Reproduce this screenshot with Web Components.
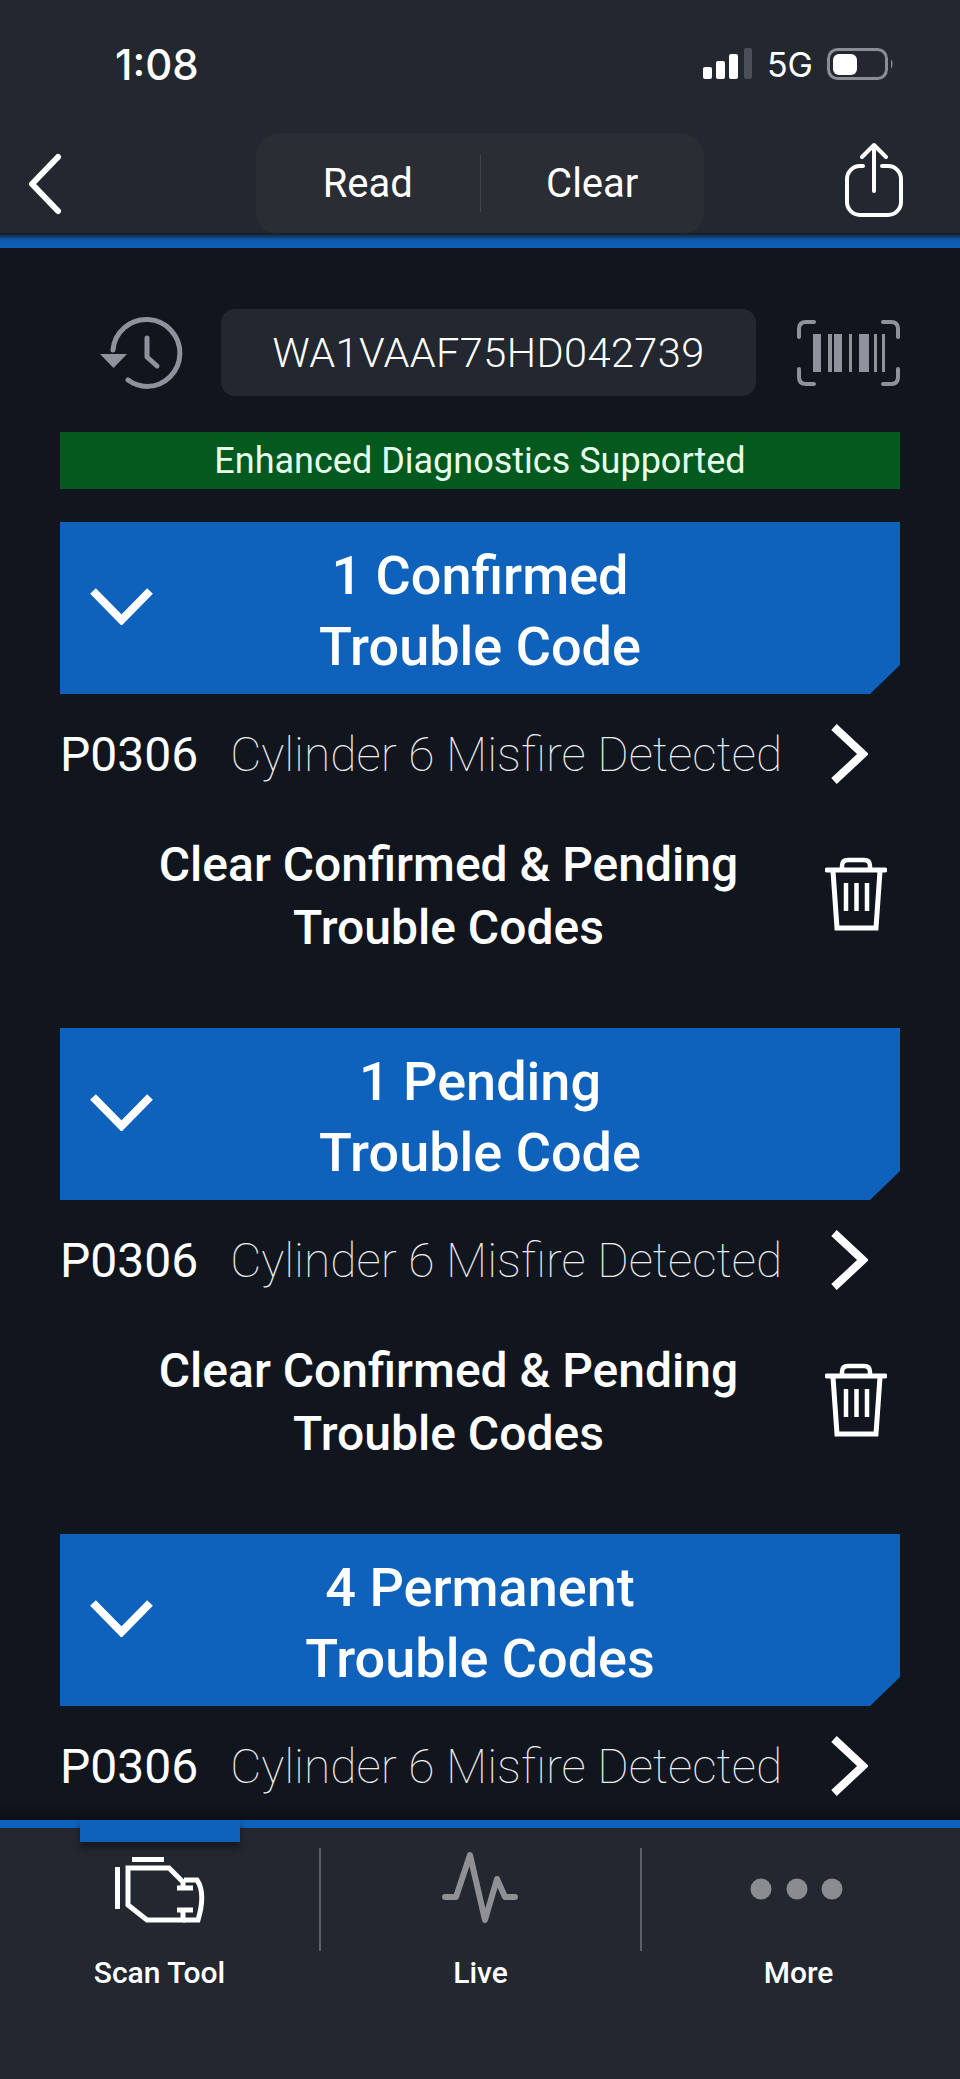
<!DOCTYPE html>
<html lang="en">
<head>
<meta charset="utf-8">
<title>Scan Tool</title>
<style>
  html, body { margin: 0; padding: 0; background: #11151e; }
  body { font-family: Roboto, "Liberation Sans", sans-serif; }
</style>
</head>
<body>
<scan-app>
  <status-bar time="1:08" network="5G"></status-bar>
  <top-bar></top-bar>
  <vin-row vin="WA1VAAF75HD042739"></vin-row>
  <notice-bar>Enhanced Diagnostics Supported</notice-bar>
  <code-section line1="1 Confirmed" line2="Trouble Code" code="P0306" desc="Cylinder 6 Misfire Detected" clear></code-section>
  <code-section line1="1 Pending" line2="Trouble Code" code="P0306" desc="Cylinder 6 Misfire Detected" clear></code-section>
  <code-section line1="4 Permanent" line2="Trouble Codes" code="P0306" desc="Cylinder 6 Misfire Detected"></code-section>
  <tab-bar slot="tabs"></tab-bar>
</scan-app>

<script>
class ScanApp extends HTMLElement {
  constructor() {
    super();
    this.attachShadow({ mode: 'open' });
  }

  connectedCallback() {
    this.shadowRoot.innerHTML = `
<style>
  :host {
    display: flex;
    flex-direction: column;
    width: 960px;
    height: 2079px;
    overflow: hidden;
    background: #11151e;
    color: #fff;
    font-family: Roboto, "Liberation Sans", sans-serif;
  }
  .top { flex: none; }
  .main {
    flex: 1;
    min-height: 0;
    overflow: hidden;
  }
</style>
<div class="top"><slot name="head"></slot></div>
<div class="main"><slot></slot></div>
<slot name="tabs"></slot>
`;
    this.querySelector('status-bar').slot = 'head';
    this.querySelector('top-bar').slot = 'head';
  }
}

class StatusBar extends HTMLElement {
  constructor() {
    super();
    this.attachShadow({ mode: 'open' });
  }

  connectedCallback() {
    this.shadowRoot.innerHTML = `
<style>
  :host {
    display: flex;
    justify-content: space-between;
    align-items: center;
    height: 128px;
    padding: 0 65px 0 115px;
    background: #23272f;
    box-sizing: border-box;
  }
  .time {
    font-family: Inter, Roboto, sans-serif;
    font-size: 42px;
    font-weight: 500;
    color: #fff;
  }
  .right {
    display: flex;
    align-items: center;
    gap: 14px;
  }
  .net {
    font-family: Inter, Roboto, sans-serif;
    font-size: 34px;
    font-weight: 400;
    color: #fff;
  }
  svg { display: block; }
</style>
<span class="time">${this.getAttribute('time')}</span>
<span class="right">
  <svg width="50" height="32" viewBox="0 0 50 32">
    <rect x="0" y="19" width="9" height="12" rx="2" fill="#fff"/>
    <rect x="13" y="13" width="9" height="18" rx="2" fill="#fff"/>
    <rect x="26" y="6" width="9" height="25" rx="2" fill="#fff"/>
    <rect x="41" y="0" width="8" height="31" rx="2" fill="#4c4f57"/>
  </svg>
  <span class="net">${this.getAttribute('network')}</span>
  <svg width="68" height="32" viewBox="0 0 68 32">
    <rect x="1.5" y="1.5" width="58" height="29" rx="9" fill="none" stroke="#8a8d94" stroke-width="3"/>
    <rect x="6" y="6" width="24" height="21" rx="6" fill="#fff"/>
    <path d="M64 11 q3 5 0 10z" fill="#8a8d94"/>
  </svg>
</span>
`;
  }
}

class TopBar extends HTMLElement {
  constructor() {
    super();
    this.attachShadow({ mode: 'open' });
  }

  connectedCallback() {
    this.shadowRoot.innerHTML = `
<style>
  :host {
    display: block;
    background: #23272f;
  }
  .row {
    display: grid;
    grid-template-columns: 1fr 448px 1fr;
    height: 100px;
    padding-top: 5px;
  }
  .back {
    padding: 19px 0 0 26px;
  }
  .share {
    justify-self: end;
    padding: 9px 56px 0 0;
  }
  .seg {
    display: flex;
    align-items: center;
    background: #2b2d35;
    border-radius: 24px 24px 20px 20px;
    font-size: 40px;
    color: #fff;
  }
  .seg span {
    flex: 1;
    text-align: center;
    height: 57px;
    line-height: 57px;
  }
  .seg span + span {
    border-left: 1px solid #43454d;
  }
  .rule {
    height: 15px;
    background: linear-gradient(#141820 0, #0f5aaa 45%, #0f62bb 100%);
  }
  svg { display: block; }
</style>
<div class="row">
  <div class="back">
    <svg width="40" height="64" viewBox="0 0 40 64">
      <path d="M32 5 L6 32 L32 59" fill="none" stroke="#fff" stroke-width="6" stroke-linecap="round" stroke-linejoin="round"/>
    </svg>
  </div>
  <div class="seg"><span>Read</span><span>Clear</span></div>
  <div class="share">
    <svg width="60" height="75" viewBox="0 0 60 75">
      <path d="M19 24 H16 A13 13 0 0 0 3 37 V60 A13 13 0 0 0 16 73 H44 A13 13 0 0 0 57 60 V37 A13 13 0 0 0 44 24 H38" fill="none" stroke="#fff" stroke-width="4" stroke-linecap="round"/>
      <path d="M30 49 V3 M18 15 L30 3 L42 15" fill="none" stroke="#fff" stroke-width="4" stroke-linecap="round" stroke-linejoin="round"/>
    </svg>
  </div>
</div>
<div class="rule"></div>
`;
  }
}

class VinRow extends HTMLElement {
  constructor() {
    super();
    this.attachShadow({ mode: 'open' });
  }

  connectedCallback() {
    this.shadowRoot.innerHTML = `
<style>
  :host {
    display: flex;
    align-items: center;
    padding: 61px 60px 0 100px;
  }
  .vin {
    width: 535px;
    height: 87px;
    margin-left: 18px;
    margin-right: 41px;
    display: flex;
    align-items: center;
    justify-content: center;
    background: #23272f;
    border-radius: 14px;
    font-size: 41.500px;
    font-weight: 300;
    letter-spacing: 0.4px;
    color: #fff;
  }
  svg { display: block; flex: none; }
</style>
<svg width="103" height="74" viewBox="0 0 103 74">
  <path d="M13 34 A33.5 33.5 0 1 1 47 70.500 A34 34 0 0 1 28 64" fill="none" stroke="#8f929c" stroke-width="5" stroke-linecap="round"/>
  <path d="M0 38 H27 L13.500 52 Z" fill="#8f929c"/>
  <path d="M47 22 V41 L57 50" fill="none" stroke="#8f929c" stroke-width="5" stroke-linecap="round" stroke-linejoin="round"/>
</svg>
<span class="vin">${this.getAttribute('vin')}</span>
<svg width="103" height="66" viewBox="0 0 103 66">
  <path d="M17 2 H9 Q2 2 2 9 V17 M86 2 H94 Q101 2 101 9 V17 M17 64 H9 Q2 64 2 57 V49 M86 64 H94 Q101 64 101 57 V49" fill="none" stroke="#8f929c" stroke-width="4" stroke-linecap="round"/>
  <g fill="#8f929c">
    <rect x="16" y="14" width="8" height="38"/>
    <rect x="31" y="14" width="4" height="38"/>
    <rect x="37" y="14" width="8" height="38"/>
    <rect x="52" y="14" width="3" height="38"/>
    <rect x="62" y="14" width="10" height="38"/>
    <rect x="77" y="14" width="3" height="38"/>
    <rect x="85" y="14" width="3" height="38"/>
  </g>
</svg>
`;
  }
}

class NoticeBar extends HTMLElement {
  constructor() {
    super();
    this.attachShadow({ mode: 'open' });
    this.shadowRoot.innerHTML = `
<style>
  :host {
    display: flex;
    align-items: center;
    justify-content: center;
    height: 57px;
    margin: 36px 60px 33px;
    background: #04591f;
    color: #e6ffec;
    font-size: 36px;
  }
</style>
<slot></slot>
`;
  }
}

// blue header + one code row + optional clear action
class CodeSection extends HTMLElement {
  constructor() {
    super();
    this.attachShadow({ mode: 'open' });
  }

  connectedCallback() {
    const clearBlock = this.hasAttribute('clear') ? `
<div class="clear">
  <div class="clear-text">Clear Confirmed &amp; Pending<br>Trouble Codes</div>
  <svg width="62" height="74" viewBox="0 0 62 74">
    <path d="M2 13 H60" stroke="#fff" stroke-width="5" stroke-linecap="round"/>
    <path d="M17 12 V9 Q17 3 23 3 H39 Q45 3 45 9 V12" fill="none" stroke="#fff" stroke-width="4.500"/>
    <path d="M8 14 L12 71 H51 L55 14" fill="none" stroke="#fff" stroke-width="5"/>
    <path d="M21 26 V54 M31.500 26 V54 M42 26 V54" stroke="#fff" stroke-width="4.500"/>
  </svg>
</div>` : '';

    this.shadowRoot.innerHTML = `
<style>
  :host {
    display: block;
    margin: 0 60px;
    height: 506px;
  }
  .head {
    display: grid;
    grid-template-columns: 1fr auto 1fr;
    align-items: center;
    height: 172px;
    background: #0f62bb;
    clip-path: polygon(0 0, 100% 0, 100% 143px, 810px 100%, 0 100%);
  }
  .head svg { margin-left: 30px; margin-top: -4px; }
  .title {
    padding-top: 5px;
    text-align: center;
    font-size: 54px;
    font-weight: 500;
    line-height: 71px;
    color: #fff;
  }
  .row {
    display: flex;
    align-items: center;
    height: 120px;
  }
  .code {
    font-size: 48px;
    font-weight: 400;
    color: #fff;
  }
  .desc {
    margin-left: 32px;
    font-size: 48px;
    font-weight: 100;
    color: #eeeeee;
    flex: 1;
  }
  .row svg { margin-right: 32px; }
  .clear {
    display: flex;
    align-items: center;
    padding: 19px 0 0 12px;
    margin-right: 13px;
  }
  .clear svg { margin-top: -4px; }
  .clear-text {
    flex: 1;
    text-align: center;
    font-size: 48px;
    font-weight: 500;
    line-height: 63px;
    color: #fff;
  }
  svg { display: block; flex: none; }
</style>
<div class="head">
  <svg width="63" height="37" viewBox="0 0 63 37">
    <path d="M3 3 L31.500 32 L60 3" fill="none" stroke="#fff" stroke-width="8"/>
  </svg>
  <div class="title">${this.getAttribute('line1')}<br>${this.getAttribute('line2')}</div>
  <span></span>
</div>
<div class="row">
  <span class="code">${this.getAttribute('code')}</span>
  <span class="desc">${this.getAttribute('desc')}</span>
  <svg width="38" height="60" viewBox="0 0 38 60">
    <path d="M4 3 L33 30 L4 57" fill="none" stroke="#fff" stroke-width="8"/>
  </svg>
</div>
${clearBlock}
`;
  }
}

class TabBar extends HTMLElement {
  constructor() {
    super();
    this.attachShadow({ mode: 'open' });
  }

  connectedCallback() {
    this.shadowRoot.innerHTML = `
<style>
  :host {
    display: block;
    flex: none;
    height: 259px;
    background: #23272f;
    position: relative;
    box-sizing: border-box;
  }
  .fade {
    position: absolute;
    left: 0;
    right: 0;
    top: -20px;
    height: 20px;
    background: linear-gradient(rgba(16,20,29,0), #0c1016);
  }
  .line {
    height: 8px;
    background: #0f62bb;
  }
  .active {
    position: absolute;
    left: 80px;
    top: 0;
    width: 160px;
    height: 22px;
    background: #0f62bb;
    box-shadow: 0 6px 6px #15181e;
  }
  .tabs {
    display: grid;
    grid-template-columns: 319px 2px 319px 2px 1fr;
    padding-top: 20px;
  }
  .sep {
    height: 103px;
    background: #5b5f67;
  }
  .tab {
    display: flex;
    flex-direction: column;
    align-items: center;
  }
  .tab.more { padding-right: 5px; }
  .ico {
    height: 103px;
    display: flex;
    align-items: flex-start;
    justify-content: center;
  }
  .tab span {
    margin-top: 4px;
    font-size: 30px;
    font-weight: 500;
    line-height: 36px;
    color: #fff;
  }
  svg { display: block; }
</style>
<div class="fade"></div>
<div class="line"></div>
<div class="active"></div>
<div class="tabs">
  <div class="tab">
    <div class="ico">
      <svg width="92" height="68" viewBox="0 0 92 68" style="margin-top:8px">
        <path d="M3.500 11 V53" stroke="#fff" stroke-width="5" fill="none"/>
        <path d="M18 3.500 H50" stroke="#fff" stroke-width="5" fill="none"/>
        <path d="M69 32 V26 L55 12 H14 V49 L33 64 H69 V54" fill="none" stroke="#fff" stroke-width="5"/>
        <path d="M70 24 H83 Q92 37 84 64 H69" fill="none" stroke="#fff" stroke-width="5"/>
        <path d="M63 32 H79 M63 54 H79" fill="none" stroke="#fff" stroke-width="5"/>
      </svg>
    </div>
    <span>Scan Tool</span>
  </div>
  <div class="sep"></div>
  <div class="tab">
    <div class="ico">
      <svg width="76" height="72" viewBox="0 0 76 72" style="margin:4px 2px 0 0">
        <path d="M3 45 H14 L28 3 L43 68 L55 27 L63 45 H73" fill="none" stroke="#8e9094" stroke-width="6" stroke-linecap="round" stroke-linejoin="round"/>
      </svg>
    </div>
    <span>Live</span>
  </div>
  <div class="sep"></div>
  <div class="tab more">
    <div class="ico">
      <svg width="93" height="22" viewBox="0 0 93 22" style="margin:30px 5px 0 0">
        <circle cx="11" cy="11" r="10.500" fill="#8a8c90"/>
        <circle cx="47" cy="11" r="10.500" fill="#8a8c90"/>
        <circle cx="82" cy="11" r="10.500" fill="#8a8c90"/>
      </svg>
    </div>
    <span>More</span>
  </div>
</div>
`;
  }
}

customElements.define('scan-app', ScanApp);
customElements.define('status-bar', StatusBar);
customElements.define('top-bar', TopBar);
customElements.define('vin-row', VinRow);
customElements.define('notice-bar', NoticeBar);
customElements.define('code-section', CodeSection);
customElements.define('tab-bar', TabBar);
</script>
</body>
</html>
